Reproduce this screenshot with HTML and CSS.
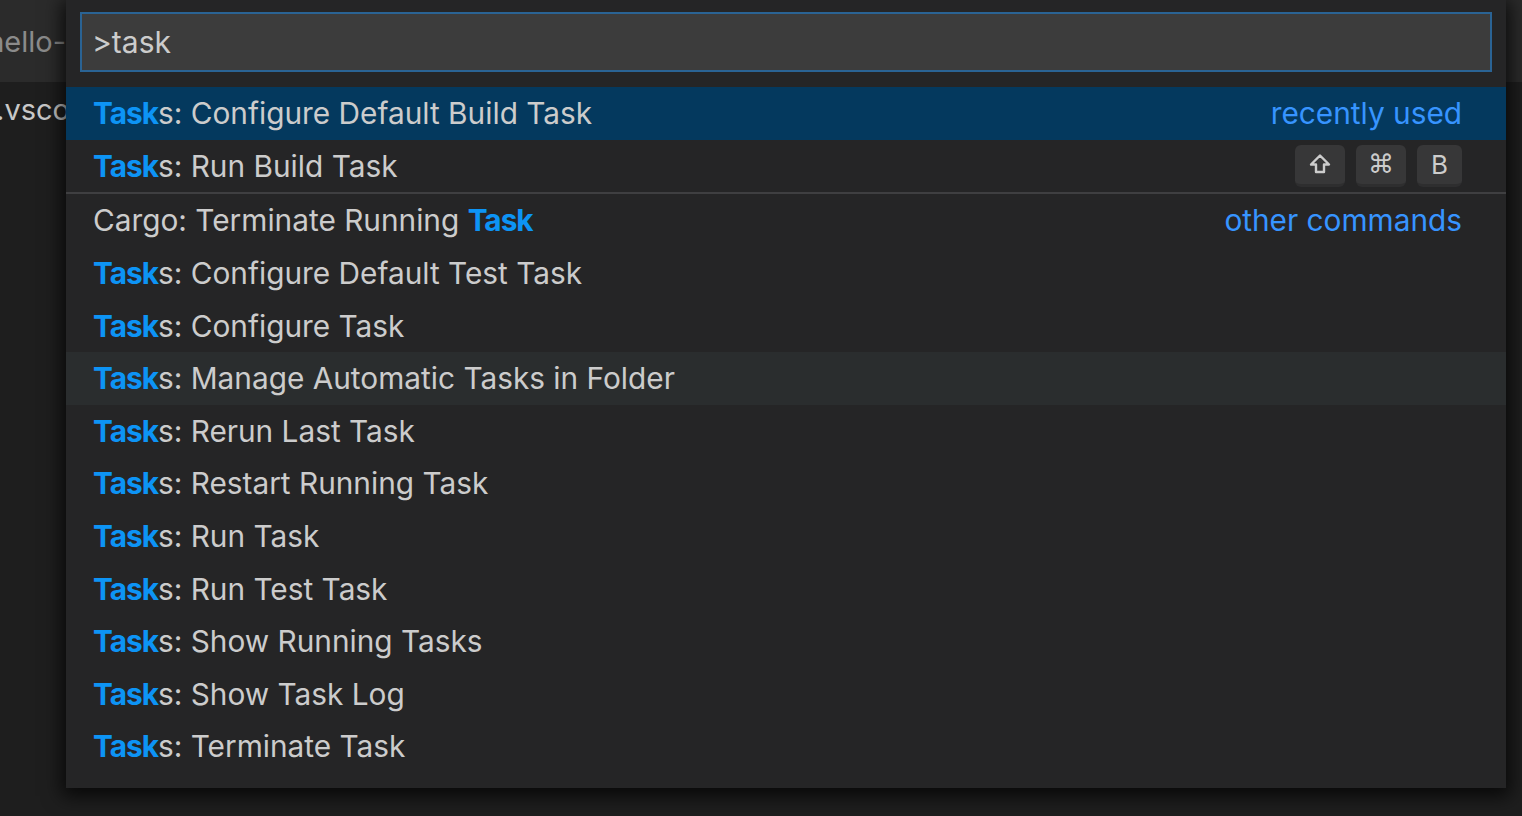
FILE: index.html
```html
<!DOCTYPE html>
<html>
<head>
<meta charset="utf-8">
<link rel="stylesheet" href="styles.css">
</head>
<body>
<div class="workbench">
  <div class="tabs"><div class="tab">hello-</div></div>
  <div class="editor"><div class="side-text">.vsco</div></div>
</div>
<div class="quick-pick">
  <div class="input">&gt;task</div>
  <div class="list">
    <div class="row selected"><span class="label"><b class="hl">Task</b>s: Configure Default Build Task</span><span class="desc">recently used</span></div>
    <div class="row"><span class="label"><b class="hl">Task</b>s: Run Build Task</span>
      <span class="keys">
        <span class="key"><svg width="22" height="22" viewBox="0 0 22 22"><path d="M11 2.5 L20 11.5 H15 V19 H7 V11.5 H2 Z" fill="none" stroke="#cccccc" stroke-width="2.4" stroke-linejoin="round"/></svg></span>
        <span class="key">⌘</span>
        <span class="key narrow">B</span>
      </span>
    </div>
    <div class="sep"></div>
    <div class="row"><span class="label">Cargo: Terminate Running <b class="hl">Task</b></span><span class="desc">other commands</span></div>
    <div class="row"><span class="label"><b class="hl">Task</b>s: Configure Default Test Task</span></div>
    <div class="row"><span class="label"><b class="hl">Task</b>s: Configure Task</span></div>
    <div class="row hover"><span class="label"><b class="hl">Task</b>s: Manage Automatic Tasks in Folder</span></div>
    <div class="row"><span class="label"><b class="hl">Task</b>s: Rerun Last Task</span></div>
    <div class="row"><span class="label"><b class="hl">Task</b>s: Restart Running Task</span></div>
    <div class="row"><span class="label"><b class="hl">Task</b>s: Run Task</span></div>
    <div class="row"><span class="label"><b class="hl">Task</b>s: Run Test Task</span></div>
    <div class="row"><span class="label"><b class="hl">Task</b>s: Show Running Tasks</span></div>
    <div class="row"><span class="label"><b class="hl">Task</b>s: Show Task Log</span></div>
    <div class="row"><span class="label"><b class="hl">Task</b>s: Terminate Task</span></div>
  </div>
</div>
</body>
</html>
```

FILE: styles.css
```css
html, body {
  margin: 0;
  padding: 0;
}
body {
  width: 1522px;
  height: 816px;
  overflow: hidden;
  background: #1e1e1e;
  font-family: Inter, "Noto Sans", "DejaVu Sans", sans-serif;
  position: relative;
}
.workbench {
  display: flex;
  flex-direction: column;
  height: 816px;
}
.tabs {
  height: 82px;
  background: #2b2b2b;
  display: flex;
  align-items: center;
  overflow: hidden;
}
.tab {
  width: 66px;
  display: flex;
  justify-content: flex-end;
  color: #8b8b8b;
  font-size: 29px;
  white-space: nowrap;
  overflow: hidden;
  flex-shrink: 0;
}
.editor {
  flex: 1;
  background: #1e1e1e;
  overflow: hidden;
}
.side-text {
  width: 70px;
  padding-top: 10px;
  color: #c8c8c8;
  font-size: 29px;
  display: flex;
  justify-content: flex-end;
  overflow: hidden;
  white-space: nowrap;
}
.quick-pick {
  position: absolute;
  left: 66px;
  top: 0;
  width: 1440px;
  height: 788px;
  background: #252526;
  box-shadow: 0 4px 18px 4px rgba(0, 0, 0, 0.75);
  display: flex;
  flex-direction: column;
}
.input {
  margin: 12px 14px 0 14px;
  height: 56px;
  border: 2px solid #2a6394;
  background: #3c3c3c;
  color: #cccccc;
  font-size: 30px;
  display: flex;
  align-items: center;
  padding-left: 10px;
}
.list {
  margin-top: 15px;
  display: flex;
  flex-direction: column;
}
.row {
  height: 52.6px;
  display: flex;
  align-items: center;
  justify-content: space-between;
  padding: 0 44px 0 27px;
  color: #cccccc;
  font-size: 29.8px;
  white-space: nowrap;
}
.row.selected {
  background: #04395e;
}
.row.hover {
  background: #2a2d2e;
}
.hl {
  color: #0d94f5;
  font-weight: 700;
  letter-spacing: -1px;
}
.desc {
  color: #3794ff;
}
.sep {
  height: 2px;
  background: #3f3f41;
}
.keys {
  display: flex;
  gap: 11px;
}
.key {
  width: 50px;
  height: 42px;
  box-sizing: border-box;
  border-radius: 6px;
  background: #373738;
  border-bottom: 3px solid #2e2e2f;
  display: flex;
  align-items: center;
  justify-content: center;
  color: #cccccc;
  font-size: 26px;
  font-family: "DejaVu Sans", sans-serif;
}
.key.narrow {
  width: 45px;
  font-family: Inter, sans-serif;
}
```
